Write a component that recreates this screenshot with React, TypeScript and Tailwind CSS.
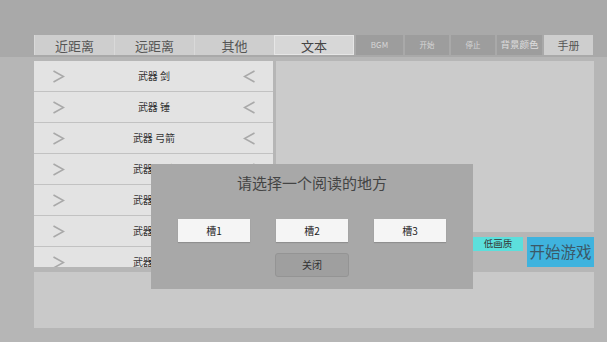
import React from "react";

const F = { fontFamily: '"Noto Sans CJK SC", "Noto Sans", sans-serif' };

function Chevron({ dir }: { dir: "right" | "left" }) {
  return (
    <svg width="13" height="13" viewBox="0 0 13 13" className="shrink-0">
      {dir === "right" ? (
        <polyline points="1.5,1 11.5,6.5 1.5,12" fill="none" stroke="#a9a9a9" strokeWidth="1.6" />
      ) : (
        <polyline points="11.5,1 1.5,6.5 11.5,12" fill="none" stroke="#a9a9a9" strokeWidth="1.6" />
      )}
    </svg>
  );
}

const rows = ["武器 剑", "武器 锤", "武器 弓箭", "武器 长枪", "武器 匕首", "武器 法杖", "武器 盾牌"];

export default function App() {
  return (
    <div className="relative w-[607px] h-[342px] overflow-hidden bg-[#b6b6b6]" style={F}>
      {/* header */}
      <div className="h-[57px] bg-[#a9a9a9] pt-[35px] pl-[34px]">
        <div className="flex h-[20px] items-stretch">
          {["近距离", "远距离", "其他"].map((t) => (
            <div
              key={t}
              className="w-[80px] flex items-center justify-center bg-[#cecece] border-l border-[#d9d9d9] text-[13px] text-[#555] leading-none"
            >
              {t}
            </div>
          ))}
          <div className="w-[80px] flex items-center justify-center bg-[#d7d7d7] border border-[#e6e6e6] text-[13px] text-[#444] leading-none">
            文本
          </div>
          <div className="w-[2px]" />
          <div className="w-[47px] flex items-center justify-center bg-[#9d9d9d] text-[8px] text-[#d6d6d6] leading-none">
            BGM
          </div>
          <div className="w-[2px]" />
          <div className="w-[44px] flex items-center justify-center bg-[#9d9d9d] text-[7.5px] text-[#d6d6d6] leading-none">
            开始
          </div>
          <div className="w-[2px]" />
          <div className="w-[44px] flex items-center justify-center bg-[#9d9d9d] text-[7.5px] text-[#d6d6d6] leading-none">
            停止
          </div>
          <div className="w-[2px]" />
          <div className="w-[45px] flex items-center justify-center bg-[#9d9d9d] text-[9.5px] text-[#dedede] leading-none">
            背景颜色
          </div>
          <div className="w-[2px]" />
          <div className="w-[49px] flex items-center justify-center bg-[#cecece] text-[11px] text-[#555] leading-none">
            手册
          </div>
        </div>
      </div>

      {/* body */}
      <div className="pl-[34px] pt-[4px] w-[594px]">
        <div className="flex gap-[3px] h-[211px]">
          <div className="w-[239px] h-[206px] overflow-hidden bg-[#c2c2c2]">
            {rows.map((r) => (
              <div
                key={r}
                className="h-[31px] border-b border-[#c2c2c2] bg-[#e3e3e3] flex items-center justify-between pl-[18px] pr-[17px]"
              >
                <Chevron dir="right" />
                <span className="text-[10px] text-[#333] leading-none">{r}</span>
                <Chevron dir="left" />
              </div>
            ))}
          </div>
          <div className="flex-1 flex flex-col">
            <div className="h-[171px] bg-[#cbcbcb]" />
            <div className="flex items-start pt-[5px] pl-[197px] gap-[4px]">
              <div className="mt-[0px] w-[50px] h-[14px] bg-[#5cdfdc] flex items-center justify-center text-[9.5px] text-[#333] leading-none">
                低画质
              </div>
              <div className="w-[67px] h-[30px] bg-[#3fb3de] flex items-center justify-center text-[15.5px] text-[#3b5868] leading-none">
                开始游戏
              </div>
            </div>
          </div>
        </div>
        <div className="h-[56px] bg-[#c9c9c9]" />
      </div>

      {/* dialog */}
      <div className="absolute left-[151px] top-[164px] w-[322px] h-[125px] bg-[#a8a8a8] flex flex-col items-center">
        <div className="pt-[9px] h-[55px] text-[15px] text-[#444] leading-[20px]">请选择一个阅读的地方</div>
        <div className="flex gap-[26px]">
          {["槽1", "槽2", "槽3"].map((s) => (
            <div
              key={s}
              className="w-[72px] h-[23px] bg-[#f5f5f5] shadow-[0_1px_1px_rgba(0,0,0,0.15)] flex items-center justify-center text-[10px] text-[#222] leading-none"
            >
              {s}
            </div>
          ))}
        </div>
        <div className="mt-[11px] w-[74px] h-[24px] bg-[#9f9f9f] border border-[#949494] rounded-[3px] flex items-center justify-center text-[10px] text-[#333] leading-none">
          关闭
        </div>
      </div>
    </div>
  );
}
